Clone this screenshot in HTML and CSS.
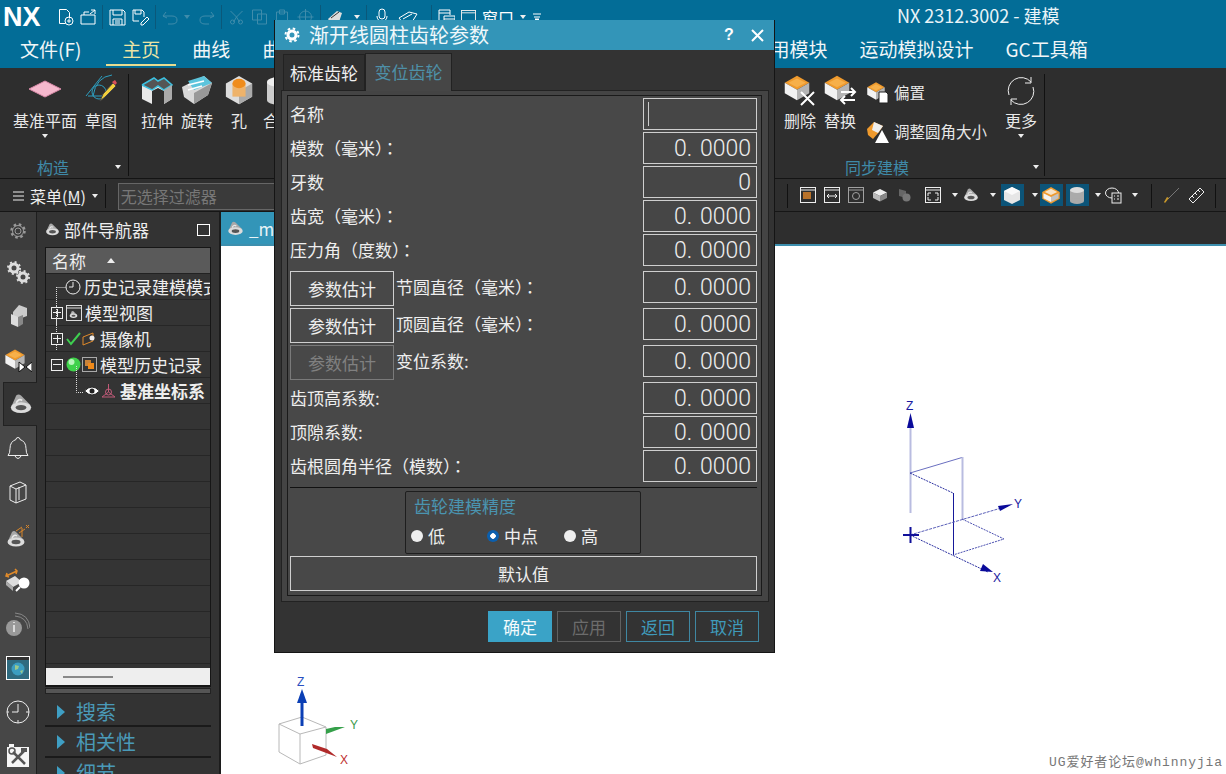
FILE: index.html
```html
<!DOCTYPE html>
<html lang="zh">
<head>
<meta charset="utf-8">
<title>NX 2312.3002 - 建模</title>
<link rel="stylesheet" href="styles.css">
</head>
<body>
<svg class="defs" width="0" height="0">
  <symbol id="box" viewBox="0 0 32 32"><polygon points="16,2 30,10 16,18 2,10" fill="#ef9a2d"/><polygon points="16,5 26,10 16,15 6,10" fill="#f7b04a"/><polygon points="2,10 16,18 16,30 2,22" fill="#f2f2f2"/><polygon points="30,10 16,18 16,30 30,22" fill="#b5b5b5"/></symbol>
  <symbol id="hat" viewBox="0 0 20 20"><path d="M2 12 6 3q2-2 4 0l8 8z" fill="#a8a8a8"/><path d="M6 9q2-4 5-2" fill="none" stroke="#e8e8e8" stroke-width="1.500"/><ellipse cx="10" cy="13" rx="8.500" ry="4.500" fill="#dcdcdc"/><ellipse cx="10" cy="13" rx="4.500" ry="2.200" fill="#555"/></symbol>
  <symbol id="tbwin" viewBox="0 0 16 16"><rect x=".5" y=".5" width="15" height="15" fill="none" stroke="#eee"/><line x1="1" y1="3" x2="15" y2="3" stroke="#eee"/></symbol>
</svg>

<header class="titlebar">
  <span class="logo">NX</span>
  <div class="quick">
    <svg width="16" height="18" viewBox="0 0 16 18"><path d="M1.500 1.500h7l3 3v6M1.500 1.500v14h6" fill="none" stroke="#fff"/><circle cx="11" cy="13" r="4" fill="none" stroke="#fff"/><path d="M9 13h4M11 11v4" stroke="#fff"/></svg>
    <svg width="16" height="16" viewBox="0 0 16 16"><path d="M1 6h14v9H1zM4 6V3h5M10 5l5-4M11 1h4v4" fill="none" stroke="#fff"/></svg>
    <i class="qsep"></i>
    <svg width="17" height="17" viewBox="0 0 17 17"><path d="M1 1h13l2 2v13H1zM4 1v5h9V1M4 16v-6h9v6M6 12h5M6 14h5" fill="none" stroke="#fff"/></svg>
    <svg width="17" height="17" viewBox="0 0 17 17"><path d="M1 1h9l2 2v5M1 1v11h6M3 1v4h6V1M9 14l6-6 2 2-6 6H9z" fill="none" stroke="#fff"/></svg>
    <i class="qsep"></i>
    <svg width="16" height="16" viewBox="0 0 16 16"><path d="M4 3 1 7l4 2M1 7h9q5 0 5 4t-5 4H6" fill="none" stroke="#3f8cab"/></svg>
    <span class="caret dimc"></span>
    <svg class="m3" width="16" height="16" viewBox="0 0 16 16"><path d="M12 3l3 4-4 2M15 7H6q-5 0-5 4t5 4h4" fill="none" stroke="#3f8cab"/></svg>
    <i class="qsep"></i>
    <svg width="17" height="16" viewBox="0 0 16 16"><path d="M8 8 2 2M8 8l6-6M8 8l-3 5M8 8l3 5" fill="none" stroke="#3f8cab"/><circle cx="4" cy="13" r="2" fill="none" stroke="#3f8cab"/><circle cx="12" cy="13" r="2" fill="none" stroke="#3f8cab"/></svg>
    <svg width="17" height="16" viewBox="0 0 16 16"><path d="M1 1h9v10H1zM6 5h9v10H6z" fill="none" stroke="#3f8cab"/></svg>
    <svg width="17" height="16" viewBox="0 0 16 16"><path d="M2 3h11v12H2zM5 1h5v4H5z" fill="none" stroke="#3f8cab"/></svg>
    <svg width="17" height="16" viewBox="0 0 16 16"><circle cx="8" cy="8" r="6" fill="none" stroke="#3f8cab"/><path d="M8 0v16M0 8h16" stroke="#3f8cab"/></svg>
    <i class="qsep"></i>
    <svg width="17" height="16" viewBox="0 0 17 16"><path d="M1 10l9-8 5 2-3 9H3z" fill="#ddd"/><path d="M4 9l8-6" stroke="#333"/></svg>
    <span class="caret m4"></span>
    <i class="qsep"></i>
    <svg class="m3" width="12" height="18" viewBox="0 0 12 18"><rect x="3" y="1" width="6" height="10" rx="3" fill="none" stroke="#fff"/><path d="M1 8q0 5 5 5t5-5M6 13v3M3 16h6" fill="none" stroke="#fff"/></svg>
    <svg class="m3" width="24" height="14" viewBox="0 0 24 14"><path d="M2 8l10-6 8 2-5 8-9 1z" fill="none" stroke="#fff"/><path d="M6 9l9-5" stroke="#fff"/></svg>
    <i class="qsep m4"></i>
    <svg width="17" height="17" viewBox="0 0 17 17"><path d="M1 1h11v5M1 1v11h5M1 4h11M6 7h11v9H6zM6 10h11" fill="none" stroke="#fff"/></svg>
    <svg width="15" height="17"><use href="#tbwin"/></svg>
    <span class="qtext">窗口</span>
    <span class="caret"></span>
    <svg width="10" height="10" viewBox="0 0 10 10"><path d="M1 2h8M2 5h6M5 9 3 7h4z" stroke="#fff" fill="#fff"/></svg>
  </div>
  <span class="apptitle">NX 2312.3002 - 建模</span>
</header>

<nav class="menubar">
  <a class="menu first">文件(F)</a>
  <a class="menu active">主页</a>
  <a class="menu">曲线</a>
  <a class="menu">曲面</a>
  <div class="menugap"></div>
  <a class="menu">应用模块</a>
  <a class="menu">运动模拟设计</a>
  <a class="menu">GC工具箱</a>
</nav>

<section class="ribbon">
  <div class="rgroup g1">
    <div class="tools">
      <div class="tool w72">
        <svg class="ticon" width="34" height="34" viewBox="0 0 34 34"><polygon points="17,7 33,15 17,23 1,15" fill="#f5b8cd" stroke="#d98aa8"/></svg>
        <span>基准平面</span><span class="caret tc"></span>
      </div>
      <div class="tool w40">
        <svg class="ticon" width="34" height="34" viewBox="0 0 34 34"><path d="M2 22 18 2M4 22h18M28 1Q12 3 9 22" fill="none" stroke="#2d9fc0"/><circle cx="15" cy="18" r="7" fill="none" stroke="#2d9fc0"/><path d="M16 27l3-7 10-11 3 3-11 11z" fill="#f2cf3c" stroke="#444"/><path d="M28 8l3-2 2 3-2 2z" fill="#d8505a"/></svg>
        <span>草图</span>
      </div>
    </div>
    <div class="glabel gbuild">构造<span class="caret gc"></span></div>
  </div>
  <div class="rgroup g2">
    <div class="tools">
      <div class="tool w40">
        <svg class="ticon" width="34" height="34" viewBox="0 0 34 34"><polygon points="2,11 14,4 18,7 24,4 32,11 32,25 24,30 24,17 18,14 12,17 12,30 2,25" fill="#e8e8e8"/><polyline points="2,11 14,4 18,7 24,4 32,11 24,16 18,12 12,16 2,11" fill="#555" stroke="#3cc0e0" stroke-width="1.500"/><polygon points="24,16 32,11 32,25 24,30" fill="#aaa"/></svg>
        <span>拉伸</span>
      </div>
      <div class="tool w40">
        <svg class="ticon" width="34" height="34" viewBox="0 0 34 34"><polygon points="2,13 24,2 32,9 28,21 14,30 4,23" fill="#d8d8d8"/><path d="M8 7 24 2l8 7-18 7z" fill="#5cc4dc"/><path d="M8 11l16-4M8 16l14-4" stroke="#fff" stroke-width="1.500"/><polygon points="32,9 28,21 14,30 14,19" fill="#999"/></svg>
        <span>旋转</span>
      </div>
      <div class="tool w40 ml4">
        <svg class="ticon" width="30" height="34" viewBox="0 0 32 34"><polygon points="16,1 30,9 30,23 16,31 2,23 2,9" fill="#ddd"/><polygon points="30,9 30,23 16,31 16,17" fill="#aaa"/><rect x="9" y="9" width="14" height="14" fill="#eeb36b"/><ellipse cx="16" cy="9" rx="7" ry="5" fill="#ef8c1c"/></svg>
        <span>孔</span>
      </div>
      <div class="tool w40">
        <svg class="ticon" width="30" height="34" viewBox="0 0 30 34"><rect x="3" y="8" width="24" height="18" fill="#ccc"/><ellipse cx="15" cy="8" rx="12" ry="5" fill="#eee"/><ellipse cx="15" cy="26" rx="12" ry="5" fill="#ccc"/></svg>
        <span>合并</span>
      </div>
    </div>
  </div>
  <div class="rgroup g3">
    <div class="tools">
      <div class="tool w40">
        <svg class="ticon" width="34" height="34" viewBox="0 0 34 34"><use href="#box" width="28" height="28"/><path d="M18 18 31 31M31 18 18 31" stroke="#fff" stroke-width="2"/></svg>
        <span>删除</span>
      </div>
      <div class="tool w40">
        <svg class="ticon" width="34" height="34" viewBox="0 0 34 34"><use href="#box" width="28" height="28"/><path d="M18 18h14M28 14l4 4-4 4M32 26H18M22 22l-4 4 4 4" fill="none" stroke="#fff" stroke-width="2"/></svg>
        <span>替换</span>
      </div>
      <div class="tcol">
        <div class="trow">
          <svg width="23" height="24" viewBox="0 0 23 24"><use href="#box" width="20" height="20"/><path d="M13 11h7l2 2v9h-9z" fill="#fff" stroke="#222"/></svg>
          <span>偏置</span>
        </div>
        <div class="trow">
          <svg width="23" height="24" viewBox="0 0 23 24"><path d="M1 9 8 2l9 4-4 6-6 7-5-4z" fill="#ef9a2d"/><path d="M8 2l9 4-5 7-6-3z" fill="#eee"/><polygon points="16,10 23,23 9,23" fill="#fff"/></svg>
          <span>调整圆角大小</span>
        </div>
      </div>
      <div class="tool w44">
        <svg class="ticon" width="30" height="34" viewBox="0 0 30 34"><path d="M3 21A13 13 0 0 1 25 8M27 13a13 13 0 0 1-22 13" fill="none" stroke="#eee"/><path d="M25 3v6h-6M5 31v-6h6" fill="none" stroke="#eee"/></svg>
        <span>更多</span><span class="caret tc"></span>
      </div>
    </div>
    <div class="glabel gsync">同步建模<span class="caret gc gc3"></span></div>
  </div>
</section>

<section class="toolbar">
  <svg class="burger" width="11" height="10" viewBox="0 0 11 10"><path d="M0 1h11M0 5h11M0 9h11" stroke="#eee"/></svg>
  <span class="tbmenu">菜单(<u>M</u>)</span>
  <span class="caret"></span>
  <i class="tsep"></i>
  <div class="filter">无选择过滤器</div>
  <div class="tspacer"></div>
  <i class="tsep"></i>
  <div class="ticons">
    <svg width="16" height="16"><use href="#tbwin"/><rect x="3" y="5" width="8" height="7" fill="#b8722a"/></svg>
    <svg width="16" height="16"><use href="#tbwin"/><path d="M3 9h10M5 7 3 9l2 2M11 7l2 2-2 2" fill="none" stroke="#eee"/></svg>
    <svg class="faint" width="16" height="16"><use href="#tbwin"/><circle cx="8" cy="9" r="3.500" fill="none" stroke="#eee"/></svg>
    <svg width="16" height="16" viewBox="0 0 32 32"><polygon points="16,4 30,11 16,18 2,11" fill="#eee"/><polygon points="2,11 16,18 16,29 2,22" fill="#bbb"/><polygon points="30,11 16,18 16,29 30,22" fill="#888"/></svg>
    <svg width="16" height="16" viewBox="0 0 32 32"><polygon points="6,4 20,8 20,22 6,18" fill="#666"/><circle cx="21" cy="21" r="8" fill="#777"/></svg>
    <svg class="ml5" width="16" height="16"><use href="#tbwin"/><path d="M3 6h3M3 6v3M13 6h-3M13 6v3M3 13h3M3 13v-3M13 13h-3M13 13v-3" stroke="#eee" fill="none"/></svg>
    <span class="caret cpad"></span>
    <svg width="16" height="16"><use href="#hat" width="16" height="16"/></svg>
    <span class="caret cpad"></span>
    <span class="hl"><svg width="20" height="20" viewBox="0 0 20 20"><polygon points="10,2 18,6 18,15 10,19 2,15 2,6" fill="#e6e6e6"/><polygon points="2,6 10,2 18,6 10,10" fill="#fafafa"/></svg></span>
    <span class="caret"></span>
    <span class="hl hl1"><svg width="20" height="20" viewBox="0 0 32 32"><polygon points="16,3 30,11 30,22 16,30 2,22 2,11" fill="#ef9a2d"/><polygon points="16,6 26,11 16,16 6,11" fill="#f6e3c8"/><polygon points="4,13 16,19 16,27 4,21" fill="#f2f2f2"/><polygon points="28,13 16,19 16,27 28,21" fill="#c2c2c2"/></svg></span>
    <span class="hl hl2"><svg width="20" height="20" viewBox="0 0 20 20"><rect x="3" y="5" width="14" height="11" fill="#aaa"/><ellipse cx="10" cy="5" rx="7" ry="3" fill="#ddd"/><ellipse cx="10" cy="16" rx="7" ry="3" fill="#aaa"/></svg></span>
    <span class="caret cback"></span>
    <svg class="mn4" width="17" height="17" viewBox="0 0 17 17"><ellipse cx="7" cy="6" rx="6.500" ry="5" fill="none" stroke="#eee"/><rect x="7" y="6" width="9" height="10" fill="#333" stroke="#eee"/><path d="M9 9h1M12 9h2M9 12h1M12 12h2" stroke="#eee"/></svg>
    <span class="caret cpad2"></span>
  </div>
  <i class="tsep sp2"></i>
  <svg class="brush" width="17" height="17" viewBox="0 0 17 17"><path d="M16 1 5 12" stroke="#777"/><path d="M6 11 2 16l-1-1 3-5z" fill="#c8982a"/></svg>
  <svg class="brush2" width="17" height="17" viewBox="0 0 17 17"><path d="M1 12 12 1l4 4L5 16z" fill="none" stroke="#eee"/><path d="M4 9l2 2M7 6l2 2M10 3l2 2" stroke="#eee"/></svg>
  <i class="tsep sp3"></i>
</section>

<main class="workspace">
  <aside class="rail">
    <div class="railitem top"><svg width="18" height="18" viewBox="0 0 18 18"><circle cx="9" cy="9" r="3" fill="none" stroke="#999"/><circle cx="9" cy="9" r="6.500" fill="none" stroke="#999" stroke-width="2.500" stroke-dasharray="2.500 2.600"/><circle cx="9" cy="9" r="5.500" fill="none" stroke="#999"/></svg></div>
    <div class="railitem"><svg width="24" height="24" viewBox="0 0 24 24"><circle cx="8" cy="8" r="4" fill="none" stroke="#ddd" stroke-width="3"/><circle cx="8" cy="8" r="6" fill="none" stroke="#ddd" stroke-width="2" stroke-dasharray="2 2.700"/><circle cx="17" cy="17" r="4" fill="none" stroke="#ddd" stroke-width="3"/><circle cx="17" cy="17" r="6" fill="none" stroke="#ddd" stroke-width="2" stroke-dasharray="2 2.700"/></svg></div>
    <div class="railitem"><svg width="20" height="24" viewBox="0 0 20 24"><polygon points="11,1 19,4 19,12 11,15 5,12 5,8" fill="#ccc"/><polygon points="3,10 10,13 10,23 3,20" fill="#ddd"/><polygon points="10,13 15,11 15,20 10,23" fill="#888"/></svg></div>
    <div class="railitem"><svg width="28" height="24" viewBox="0 0 28 24"><use href="#box" x="0" y="0" width="22" height="22"/><path d="M15 14l6 5-6 5zM28 14l-6 5 6 5z" fill="#fff" stroke="#111"/></svg></div>
    <div class="railitem sel"><svg width="24" height="24"><use href="#hat" width="24" height="24"/></svg></div>
    <div class="railitem"><svg width="22" height="24" viewBox="0 0 22 24"><path d="M11 1.500a2 2 0 0 1 2 2q6 2 6 9 0 5 2 7H1q2-2 2-7 0-7 6-9a2 2 0 0 1 2-2zM8 20q3 5 6 0" fill="none" stroke="#eee"/></svg></div>
    <div class="railitem"><svg width="18" height="24" viewBox="0 0 18 24"><path d="M1 6l10-4 6 3v14l-10 4-6-3zM7 9v14M1 6l6 3 10-4M10 7l0 13" fill="none" stroke="#eee"/></svg></div>
    <div class="railitem"><svg width="24" height="24"><use href="#hat" y="5" width="20" height="20"/><path d="M10 7l6-4M13 9l6-4M16 4v9M20 1l3 3M23 1l-3 3" fill="none" stroke="#d8862a"/></svg></div>
    <div class="railitem"><svg width="26" height="24" viewBox="0 0 26 24"><path d="M1 8 12 3M2 5l-1 3 3 1M10 1l2 2-1 3" fill="none" stroke="#e08a2a" stroke-width="1.500"/><polygon points="1,13 10,8 17,14 8,19" fill="#ddd"/><polygon points="1,13 8,19 8,23 1,17" fill="#aaa"/><circle cx="19" cy="15" r="5.500" fill="#fff"/><path d="M15 19l-4 4" stroke="#fff" stroke-width="2"/></svg></div>
    <div class="railitem"><svg width="24" height="24" viewBox="0 0 24 24"><circle cx="8" cy="16" r="8" fill="#999"/><path d="M8 13v7M8 10v1" stroke="#eee" stroke-width="1.500"/><path d="M9 4q12 1 13 13M9 1q14 1 15 15" fill="none" stroke="#888"/></svg></div>
    <div class="railitem"><svg width="24" height="24" viewBox="0 0 24 24"><rect x=".5" y=".5" width="23" height="23" fill="#2f6b80" stroke="#fff"/><rect x="1" y="1" width="22" height="3" fill="#333"/><circle cx="12" cy="13" r="6.500" fill="#3c9dc0"/><path d="M9 9l4 1-1 3-3 1zM14 15l3-1-1 4z" fill="#9cc98a"/></svg></div>
    <div class="railitem"><svg width="24" height="24" viewBox="0 0 24 24"><circle cx="12" cy="12" r="11" fill="none" stroke="#eee"/><path d="M12 4v8H6M12 20v3M20 12h3M1 12h2" fill="none" stroke="#eee"/></svg></div>
    <div class="railitem"><svg width="24" height="26" viewBox="0 0 24 26"><rect x="1" y="4" width="22" height="20" fill="#f5f5f5"/><rect x="3" y="1" width="5" height="3" fill="#f5f5f5"/><path d="M7 9l12 12M18 8 6 20" stroke="#555" stroke-width="2.500"/><circle cx="6" cy="8" r="3" fill="none" stroke="#555" stroke-width="1.500"/><rect x="15" y="5" width="6" height="4" fill="#555"/></svg></div>
  </aside>

  <section class="navpanel">
    <div class="navhead">
      <svg width="15" height="15"><use href="#hat" width="15" height="15"/></svg>
      <span class="navtitle">部件导航器</span>
      <i class="maxbox"></i>
    </div>
    <div class="tree">
      <div class="treehead"><span>名称</span><i class="sortup"></i></div>
      <div class="treebody">
        <div class="row r0"><svg width="16" height="16" viewBox="0 0 16 16"><circle cx="8" cy="8" r="7" fill="#333" stroke="#eee"/><path d="M8 3v5H4" fill="none" stroke="#eee"/></svg><span>历史记录建模模式</span></div>
        <div class="row"><i class="expander plus"></i><svg width="16" height="16"><rect x=".5" y=".5" width="15" height="15" fill="none" stroke="#ddd"/><line x1="1" y1="3" x2="15" y2="3" stroke="#ddd"/><use href="#hat" x="3" y="5" width="9" height="9"/></svg><span>模型视图</span></div>
        <div class="row"><i class="expander plus"></i><svg width="15" height="15" viewBox="0 0 15 15"><path d="M1 8l4 5 9-11" fill="none" stroke="#3ecf50" stroke-width="2"/></svg><svg class="gap1" width="15" height="15" viewBox="0 0 15 15"><path d="M1 6l10-4v8L1 14z" fill="none" stroke="#e08a2a"/><circle cx="10" cy="7" r="2.500" fill="#eee"/></svg><span class="t2">摄像机</span></div>
        <div class="row"><i class="expander minus"></i><svg width="15" height="15" viewBox="0 0 15 15"><circle cx="7.500" cy="7.500" r="7" fill="#3fd14a"/><circle cx="5.500" cy="5" r="3" fill="#b8f5ba"/></svg><svg class="gap1" width="15" height="15" viewBox="0 0 15 15"><rect x=".5" y=".5" width="14" height="14" fill="none" stroke="#aaa"/><rect x="3" y="3" width="6" height="6" fill="#c9833a"/><rect x="6" y="6" width="6" height="6" fill="#f08a1a"/></svg><span class="t2">模型历史记录</span></div>
        <div class="row r4"><svg width="16" height="12" viewBox="0 0 16 12"><path d="M.5 6Q8-2 15.500 6 8 14 .5 6z" fill="#fff" stroke="#222"/><circle cx="8" cy="6" r="2.500" fill="#222"/></svg><svg class="gap1" width="15" height="15" viewBox="0 0 15 15"><circle cx="7.500" cy="9" r="3" fill="none" stroke="#c05a78"/><path d="M7.500 1v8L1 14M7.500 9 14 14M1 14h13" fill="none" stroke="#c05a78"/></svg><b class="t3">基准坐标系</b></div>
        <div class="row"></div><div class="row"></div><div class="row"></div><div class="row"></div><div class="row"></div>
        <div class="row"></div><div class="row"></div><div class="row"></div><div class="row"></div><div class="row"></div>
        <svg class="links" width="80" height="130" viewBox="0 0 80 130"><path d="M10.500 13v47M10.500 13.500h9M10.500 71v6M30.500 92v26.500h7" fill="none" stroke="#ddd" stroke-dasharray="1 1"/><path d="M10.500 32v2M10.500 44v8" stroke="#ddd" stroke-dasharray="1 1"/></svg>
      </div>
      <div class="hscroll"><i></i></div>
    </div>
    <div class="splitbar"></div>
    <div class="accordion afirst"><i class="tri"></i>搜索</div>
    <div class="accordion"><i class="tri"></i>相关性</div>
    <div class="accordion"><i class="tri"></i>细节</div>
  </section>

  <section class="viewport">
    <div class="tabbar"><div class="vtab"><svg width="17" height="17"><use href="#hat" width="17" height="17"/></svg><span>_model1.prt</span></div></div>
    <div class="canvas">
      <svg class="triad-big" width="130" height="190" viewBox="0 0 130 190">
        <g fill="none" stroke-width="1">
          <path d="M20.500 22v86" stroke="#b9bce0" stroke-width="2"/>
          <path d="M20 68 72 52.500" stroke="#6a6fc0"/>
          <path d="M72.500 52v62" stroke="#b9bce0" stroke-width="2"/>
          <path d="M20 68l43 20" stroke="#2a2fa0" stroke-dasharray="2 1"/>
          <path d="M63.500 88v62" stroke="#16199a"/>
          <path d="M20 130 118 101" stroke="#5a5fb8" stroke-dasharray="3 1"/>
          <path d="M20 130 98 167" stroke="#2a2fa0" stroke-dasharray="2 1"/>
          <path d="M72 114 114 134 63 150" stroke="#4a4fb0" stroke-dasharray="2 1"/>
          <path d="M13 130h16M20.500 122v16" stroke="#10109a" stroke-width="2"/>
        </g>
        <polygon points="20.500,8 24,23 17,23" fill="#0a0a9a"/>
        <polygon points="123,99 110,106 108,101" fill="#0a0a9a"/>
        <polygon points="103,167 90,166 93,159" fill="#0a0a9a"/>
        <text class="axis" x="16" y="5">Z</text>
        <text class="axis" x="124" y="103">Y</text>
        <text class="axis" x="103" y="177">X</text>
      </svg>
      <svg class="triad-mini" width="90" height="100" viewBox="0 0 90 100">
        <g fill="none" stroke="#b8b8b8" stroke-width="1">
          <path d="M6 52 29 45 53 55 27 62zM6 52V80L27 92 53 83V55M27 62V92"/>
        </g>
        <path d="M29 54V28" stroke="#0b3fb5" stroke-width="3"/>
        <polygon points="29,17 34,31 24,31" fill="#0b3fb5"/>
        <polygon points="72,55 53,62 53,57 62,55" fill="#35a04a"/>
        <polygon points="64,85 40,76 39,72 54,77" fill="#b02a2a"/>
        <text class="axmini z" x="24" y="14">Z</text>
        <text class="axmini y" x="77" y="57">Y</text>
        <text class="axmini x" x="67" y="92">X</text>
      </svg>
      <div class="watermark">UG爱好者论坛@whinnyjia</div>
    </div>
  </section>
</main>

<div class="dialog">
  <div class="dtitle">
    <svg width="16" height="16" viewBox="0 0 16 16"><circle cx="8" cy="8" r="4" fill="none" stroke="#fff" stroke-width="3"/><circle cx="8" cy="8" r="6.500" fill="none" stroke="#fff" stroke-width="2" stroke-dasharray="2.500 2.600"/></svg>
    <span class="dname">渐开线圆柱齿轮参数</span>
    <span class="dhelp">?</span>
    <svg class="dclose" width="13" height="13" viewBox="0 0 13 13"><path d="M1 1l11 11M12 1 1 12" stroke="#fff" stroke-width="2"/></svg>
  </div>
  <div class="tabs">
    <div class="tab">标准齿轮</div>
    <div class="tab on">变位齿轮</div>
  </div>
  <div class="panel">
    <div class="inner">
      <div class="frow"><label>名称</label><div class="field"><i class="cursor"></i></div></div>
      <div class="frow"><label>模数（毫米）<span class="colon" lang="zh-Hant">：</span></label><div class="field">0. 0000</div></div>
      <div class="frow"><label>牙数</label><div class="field">0</div></div>
      <div class="frow"><label>齿宽（毫米）<span class="colon" lang="zh-Hant">：</span></label><div class="field">0. 0000</div></div>
      <div class="frow"><label>压力角（度数）<span class="colon" lang="zh-Hant">：</span></label><div class="field">0. 0000</div></div>
      <div class="frow tall first"><button class="est">参数估计</button><label class="lb">节圆直径（毫米）<span class="colon" lang="zh-Hant">：</span></label><div class="field">0. 0000</div></div>
      <div class="frow tall"><button class="est">参数估计</button><label class="lb">顶圆直径（毫米）<span class="colon" lang="zh-Hant">：</span></label><div class="field">0. 0000</div></div>
      <div class="frow tall"><button class="est off">参数估计</button><label class="lb">变位系数:</label><div class="field">0. 0000</div></div>
      <div class="frow"><label>齿顶高系数:</label><div class="field">0. 0000</div></div>
      <div class="frow"><label>顶隙系数:</label><div class="field">0. 0000</div></div>
      <div class="frow"><label>齿根圆角半径（模数）<span class="colon" lang="zh-Hant">：</span></label><div class="field">0. 0000</div></div>
      <hr class="sep">
      <fieldset class="prec">
        <div class="prectitle">齿轮建模精度</div>
        <div class="radios">
          <span class="radio w76"><i class="dot"></i>低</span>
          <span class="radio w77"><i class="dot chk"></i>中点</span>
          <span class="radio"><i class="dot"></i>高</span>
        </div>
      </fieldset>
      <button class="defaults">默认值</button>
    </div>
  </div>
  <div class="actions">
    <button class="act ok">确定</button>
    <button class="act dis">应用</button>
    <button class="act">返回</button>
    <button class="act">取消</button>
  </div>
</div>
</body>
</html>
```

FILE: styles.css
```css
* { box-sizing: border-box; }
html, body { margin: 0; height: 774px; overflow: hidden; }
body {
  position: relative;
  width: 1226px;
  background: #2e2e2e;
  color: #eee;
  font-family: "Noto Sans CJK SC", "Noto Sans", sans-serif;
  font-size: 16px;
  line-height: 1;
}
svg { display: block; flex: none; }
.defs { height: 0; width: 0; }

.caret { display: block; flex: none; width: 0; height: 0; border: 3.5px solid transparent; border-top: 4px solid #eee; border-bottom: 0; }
.dimc { border-top-color: #3f8cab; }

/* title bar */
.titlebar { height: 34px; background: #036d97; display: flex; align-items: center; position: relative; }
.logo { font: 700 27px/34px "Liberation Sans", sans-serif; color: #fff; width: 58px; padding-left: 3px; flex: none; }
.quick { display: flex; align-items: center; gap: 6px; width: 480px; height: 34px; flex: none; }
.qsep { display: block; width: 1px; height: 24px; background: #0a587a; flex: none; }
.m3 { margin-left: 3px; }
.m4 { margin-left: 4px; }
.qtext { font-size: 16px; color: #fff; line-height: 30px; white-space: nowrap; }
.apptitle { flex: 1; padding: 0 0 4px 359px; font-size: 18px; color: #eaf4f8; white-space: nowrap; }

/* menu */
.menubar { height: 34px; background: #036d97; display: flex; padding-left: 4px; white-space: nowrap; overflow: hidden; }
.menu { padding: 0 16px; font-size: 19px; line-height: 30px; height: 32px; color: #f1f6f8; }
.menu.first { margin-right: 9px; }
.menu.active { color: #ece4a4; border-bottom: 2px solid #e6dc90; }
.menugap { width: 419px; flex: none; }

/* ribbon */
.ribbon { height: 111px; background: #2e2e2e; display: flex; padding-top: 6px; border-bottom: 1px solid #141414; }
.rgroup { display: flex; flex-direction: column; justify-content: space-between; height: 102px; }
.g1 { width: 129px; padding-left: 9px; border-right: 1px solid #111; }
.g2 { width: 641px; padding-left: 8px; }
.g3 { width: 275px; padding-left: 10px; border-right: 1px solid #111; }
.tools { display: flex; }
.tool { display: flex; flex-direction: column; align-items: center; font-size: 16px; white-space: nowrap; color: #e8e8e8; }
.w72 { width: 72px; }
.w40 { width: 40px; }
.w44 { width: 44px; }
.ml4 { margin-left: 2px; }
.ticon { height: 34px; margin-bottom: 4px; }
.tc { margin-top: 6px; }
.tcol { width: 139px; padding-left: 6px; display: flex; flex-direction: column; gap: 15px; padding-top: 7px; }
.trow { display: flex; align-items: center; gap: 5px; height: 24px; font-size: 15.500px; white-space: nowrap; color: #e8e8e8; }
.glabel { color: #3f8aa8; font-size: 16px; text-align: center; position: relative; line-height: 18px; height: 18px; }
.gbuild { padding-right: 29px; margin-right: 2px; }
.gsync { padding-right: 68px; margin-right: 2px; }
.gc { position: absolute; right: 5px; top: 7px; }
.gc3 { right: 3px; }

/* toolbar */
.toolbar { height: 33px; display: flex; align-items: center; background: #2e2e2e; border-bottom: 1px solid #161616; padding: 2px 0 0 13px; }
.burger { margin-right: 6px; }
.tbmenu { font-size: 16px; margin-right: 6px; white-space: nowrap; }
.tsep { display: block; width: 1px; height: 24px; background: #111; margin-left: 7px; flex: none; }
.filter { width: 168px; height: 27px; margin-left: 12px; background: #3a3a3a; border: 1px solid #666; color: #777; font-size: 16px; line-height: 25px; padding-left: 2px; flex: none; }
.tspacer { width: 494px; flex: none; }
.ticons { display: flex; align-items: center; gap: 8px; margin: -2px 0 0 12px; width: 351px; flex: none; }
.ml5 { margin-left: 5px; }
.faint { opacity: .6; }
.cpad { margin: 0 -3px 0 3px; }
.cpad2 { margin-left: 2px; }
.cback { margin-left: -2px; }
.hl { display: flex; align-items: center; justify-content: center; width: 23px; height: 22px; background: #0c5478; flex: none; }
.hl1 { margin-left: -6px; }
.hl2 { margin-left: -5px; }
.mn4 { margin-left: -4px; }
.sp2 { margin-left: 0; }
.brush { margin: -2px 0 0 11px; }
.brush2 { margin: -2px 0 0 8px; }
.sp3 { margin-left: 10px; }

/* workspace */
.workspace { height: 562px; display: flex; }
.rail { width: 37px; background: #474747; border-right: 1px solid #1e1e1e; display: flex; flex-direction: column; flex: none; }
.railitem { height: 44px; flex: none; display: flex; align-items: center; justify-content: center; }
.railitem.top { height: 38px; background: #3c3c3c; }
.railitem.sel { background: #333; margin-left: 3px; border: 1px solid #222; border-right: 0; width: 34px; }

.navpanel { width: 184px; background: #333; border-right: 2px solid #1c1c1c; padding: 0 9px 0 8px; flex: none; }
.navhead { height: 35px; display: flex; align-items: center; }
.navtitle { font-size: 17px; margin-left: 4px; width: 133px; white-space: nowrap; }
.maxbox { display: block; width: 13px; height: 12px; border: 1.500px solid #fff; }
.tree { width: 166px; border: 1px solid #161616; border-width: 1px 1px 2px; }
.treehead { height: 26px; background: #5a5a5a; display: flex; align-items: center; padding-left: 6px; font-size: 17px; border-bottom: 1px solid #222; }
.sortup { display: block; margin-left: 21px; width: 0; height: 0; border: 4.500px solid transparent; border-bottom: 5px solid #eee; border-top: 0; }
.treebody { height: 394px; position: relative; overflow: hidden; }
.links { position: absolute; left: 0; top: 0; z-index: 1; }
.row { height: 26px; border-bottom: 1px solid #262626; background: #343434; display: flex; align-items: center; padding-left: 5px; font-size: 17px; white-space: nowrap; overflow: hidden; }
.row > svg { margin-left: 3px; }
.row span, .row b { margin-left: 3px; }
.row .gap1 { margin-left: 1px; }
.row .t3 { margin-left: 4px; font-weight: 700; }
.r0 { padding-left: 16px; }
.r4 { padding-left: 35px; }
.expander { display: block; width: 12px; height: 12px; border: 1px solid #eee; background: linear-gradient(#eee, #eee) center / 8px 1px no-repeat #333; flex: none; }
.plus { background: linear-gradient(#eee, #eee) center / 8px 1px no-repeat, linear-gradient(#eee, #eee) center / 1px 8px no-repeat, #333; }
.hscroll { height: 17px; background: #eee; display: flex; align-items: center; padding-left: 17px; }
.hscroll i { display: block; width: 50px; height: 2px; background: #888; }
.splitbar { height: 6px; margin-top: 1px; background: #555; border: 1px solid #222; width: 166px; }
.accordion { width: 166px; height: 31px; border-bottom: 2px solid #1a1a1a; display: flex; align-items: center; padding-left: 12px; font-size: 20px; color: #4a9ab8; white-space: nowrap; }
.afirst { height: 33px; padding-top: 5px; }
.tri { display: block; width: 0; height: 0; border: 7.500px solid transparent; border-left: 8px solid #3f9fc4; border-right: 0; margin-right: 11px; }

.viewport { flex: 1; display: flex; flex-direction: column; background: #fff; }
.tabbar { height: 34px; background: #2e2e2e; border-bottom: 2px solid #3d8fae; flex: none; }
.vtab { width: 120px; height: 32px; background: #3395b8; display: flex; align-items: center; padding-left: 6px; gap: 5px; font-size: 17px; color: #e8f3f7; overflow: hidden; white-space: nowrap; }
.canvas { flex: 1; position: relative; background: #fff; }
.triad-big { position: absolute; left: 669px; top: 159px; overflow: visible; }
.triad-mini { position: absolute; left: 52px; top: 426px; overflow: visible; }
.axis { font: 12px "Liberation Sans", sans-serif; fill: #1a1aa0; }
.axmini { font: 12px "Liberation Sans", sans-serif; }
.axmini.z { fill: #2a4fc0; }
.axmini.y { fill: #3a9a4a; }
.axmini.x { fill: #c03030; }
.watermark { position: absolute; right: 3px; bottom: 2px; font: 13px/18px "Liberation Mono", "Noto Sans CJK SC", monospace; letter-spacing: .9px; color: #777; white-space: nowrap; }

/* dialog */
.dialog { position: absolute; left: 274px; top: 20px; width: 501px; height: 633px; background: #333; border: 1px solid #151515; border-top: 0; }
.dtitle { height: 30px; background: #3395b8; display: flex; align-items: center; padding-left: 9px; color: #f0f8fb; }
.dname { font-size: 20px; margin-left: 9px; width: 415px; white-space: nowrap; }
.dhelp { font: 700 16px "Liberation Sans", sans-serif; width: 27px; color: #fff; }
.tabs { display: flex; height: 40px; padding: 4px 0 0 8px; align-items: flex-end; }
.tab { width: 82px; height: 36px; background: #2f2f2f; border: 1px solid #222; border-bottom: 0; font-size: 17px; line-height: 35px; text-align: center; color: #eee; }
.tab.on { width: 87px; height: 38px; background: #464646; color: #4e90a8; border-color: #222; margin-bottom: -1px; position: relative; }
.panel { margin: 0 5px 0 6px; height: 512px; background: #444; border: 1px solid #222; padding: 4px 6px 5px 5px; }
.inner { height: 501px; background: #484848; border: 1px solid #1a1a1a; padding: 2px 4px 0 2px; display: flex; flex-direction: column; }
.frow { height: 34px; flex: none; display: flex; align-items: flex-start; }
.frow label { flex: 1; font-size: 17px; line-height: 31px; white-space: nowrap; color: #eee; }
.colon { font-family: "Noto Sans CJK TC", sans-serif; margin-left: -2px; }
.frow.tall { height: 37px; }
.frow.first { margin-top: 3px; }
.frow .lb { padding-left: 2px; }
.field { width: 114px; height: 32px; border: 1px solid #cfcfcf; background: #464646; text-align: right; font: 300 23px/31px Roboto, sans-serif; word-spacing: 2px; padding-right: 5px; color: #eee; flex: none; }
.cursor { display: block; width: 1px; height: 24px; background: #ccc; margin: 3px 0 0 4px; }
.est { width: 104px; height: 35px; background: transparent; border: 1px solid #cfcfcf; color: #eee; font: 17px/1 "Noto Sans CJK SC", sans-serif; padding: 0; flex: none; }
.est.off { color: #808080; border-color: #7a7a7a; }
.sep { width: 100%; height: 1px; background: #111; border: 0; margin: 3px 0; flex: none; }
.prec { margin: 0 0 2px 115px; width: 236px; height: 63px; border: 1px solid #1e1e1e; border-radius: 2px; padding: 4px 5px 0 8px; min-width: 0; background: #464646; }
.prectitle { font-size: 17px; line-height: 20px; color: #4a94b0; }
.radios { display: flex; margin-top: 10px; margin-left: -3px; font-size: 17px; line-height: 20px; }
.radio { display: flex; align-items: center; gap: 5px; color: #eee; }
.w76 { width: 76px; }
.w77 { width: 77px; }
.dot { display: block; width: 12px; height: 12px; border-radius: 50%; background: #eee; flex: none; }
.dot.chk { background: radial-gradient(circle, #fff 0 2.500px, #0b5fae 3px); }
.defaults { width: 467px; height: 35px; background: transparent; border: 1px solid #cfcfcf; color: #eee; font: 17px/1 "Noto Sans CJK SC", sans-serif; flex: none; padding: 0; }
.actions { display: flex; justify-content: flex-end; gap: 5px; padding: 9px 15px 0 0; }
.act { width: 64px; height: 31px; background: transparent; border: 1px solid #3f87a2; color: #3f9abb; font: 17px/1 "Noto Sans CJK SC", sans-serif; padding: 0; }
.act.ok { background: #3aa3c7; border-color: #3aa3c7; color: #f2fafc; }
.act.dis { border-color: #606060; color: #6c6c6c; }
```
